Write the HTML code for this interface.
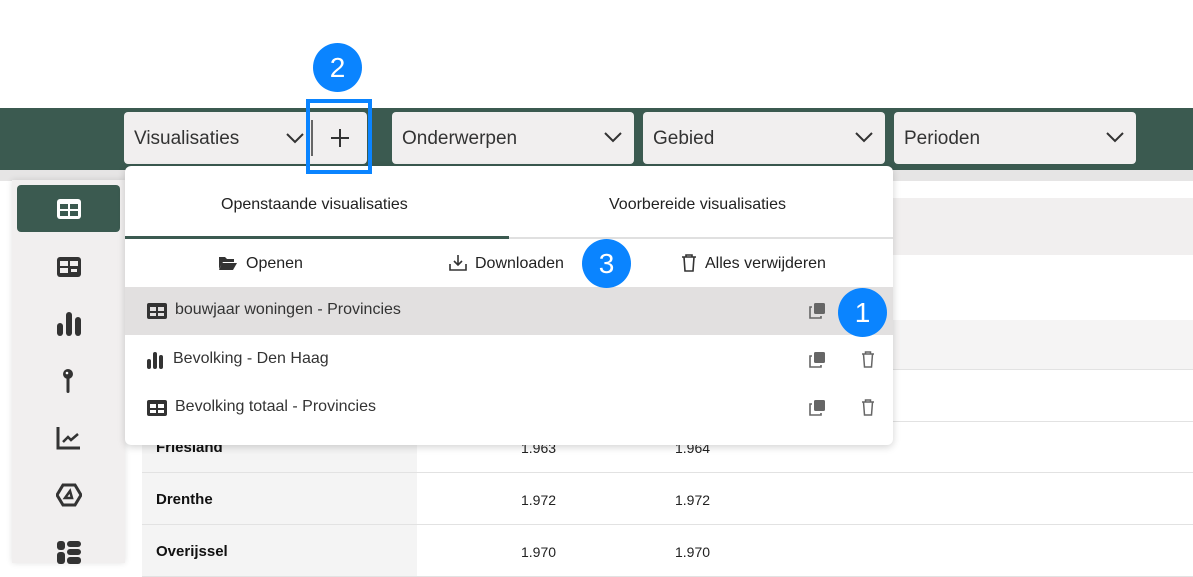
<!DOCTYPE html>
<html><head><meta charset="utf-8"><style>
*{box-sizing:border-box;margin:0;padding:0}
body{width:1193px;height:563px;overflow:hidden;background:#fff;font-family:"Liberation Sans",sans-serif;position:relative;color:#222}
.abs{position:absolute}
.hdr{left:0;top:108px;width:1193px;height:62px;background:#3b5a50}
.strip{left:0;top:170px;width:1193px;height:11px;background:#e6e5e5}
.sel{top:112px;height:52px;background:#f1efef;border-radius:4px;font-size:19px;color:#333;padding:16px 0 0 10px}
.chev{position:absolute;right:12px;top:19px}
.side{left:12px;top:180px;width:113px;height:383px;background:#f1efef;box-shadow:0 0 6px rgba(0,0,0,.12)}
.act{left:17px;top:185px;width:103px;height:47px;background:#3b5a50;border-radius:4px}
.ic{position:absolute;left:56px}
.row{left:142px;width:1051px;border-bottom:1px solid #e2e2e2;height:52px}
.lab{position:absolute;left:0;top:0;width:275px;height:100%;background:#f4f4f4;font-weight:bold;font-size:15px;padding:18px 0 0 14px;color:#111}
.num{position:absolute;top:19px;font-size:14px;color:#222}
.dd{left:125px;top:166px;width:768px;height:279px;background:#fff;border-radius:6px;box-shadow:0 2px 8px rgba(0,0,0,.18)}
.tab{position:absolute;top:30px;font-size:16px;color:#222}
.badge{width:49px;height:49px;border-radius:50%;background:#0a84ff;color:#fff;font-size:28px;text-align:center;line-height:49px;z-index:5}
.item{position:absolute;left:0;width:768px;height:48px;font-size:16px;color:#333}
.item span{position:absolute;top:14px}
</style></head><body>
<div class="abs hdr"></div>
<div class="abs strip"></div>
<div class="abs sel" style="left:124px;width:243px">Visualisaties
<svg class="abs" style="left:162px;top:20px" width="18" height="12" viewBox="0 0 18 12"><path d="M1 2l8 8 8-8" fill="none" stroke="#333" stroke-width="2"/></svg>
<div class="abs" style="left:187px;top:8px;width:2px;height:36px;background:#666"></div>
<svg class="abs" style="left:206px;top:16px" width="20" height="20"><path d="M10 1v18M1 10h18" stroke="#333" stroke-width="2"/></svg></div>
<div class="abs sel" style="left:392px;width:242px">Onderwerpen<svg class="chev" width="18" height="12"><path d="M1 2l8 8 8-8" fill="none" stroke="#333" stroke-width="2"/></svg></div>
<div class="abs sel" style="left:643px;width:242px">Gebied<svg class="chev" width="18" height="12"><path d="M1 2l8 8 8-8" fill="none" stroke="#333" stroke-width="2"/></svg></div>
<div class="abs sel" style="left:894px;width:242px">Perioden<svg class="chev" width="18" height="12"><path d="M1 2l8 8 8-8" fill="none" stroke="#333" stroke-width="2"/></svg></div>

<div class="abs" style="left:142px;top:198px;width:1051px;height:57px;background:#f1efef"></div>
<div class="abs" style="left:142px;top:320px;width:1051px;height:50px;background:#f5f4f4;border-bottom:1px solid #e2e2e2"></div>
<div class="abs row" style="top:370px"></div>
<div class="abs row" style="top:421px"><div class="lab">Friesland</div><div class="num" style="left:379px">1.963</div><div class="num" style="left:533px">1.964</div></div>
<div class="abs row" style="top:473px"><div class="lab">Drenthe</div><div class="num" style="left:379px">1.972</div><div class="num" style="left:533px">1.972</div></div>
<div class="abs row" style="top:525px"><div class="lab">Overijssel</div><div class="num" style="left:379px">1.970</div><div class="num" style="left:533px">1.970</div></div>

<div class="abs side"></div>
<div class="abs act"></div>
<svg class="ic" style="top:198px" width="26" height="22"><rect x="1" y="1" width="24" height="20" rx="3" fill="#fff"/><rect x="4" y="6" width="8" height="5" fill="#3b5a50"/><rect x="14" y="6" width="8" height="5" fill="#3b5a50"/><rect x="4" y="13" width="8" height="5" fill="#3b5a50"/><rect x="14" y="13" width="8" height="5" fill="#3b5a50"/></svg>
<svg class="ic" style="top:256px" width="26" height="22"><rect x="1" y="1" width="24" height="20" rx="3" fill="#333"/><rect x="4" y="5" width="8" height="5" fill="#f1efef"/><rect x="14" y="5" width="8" height="5" fill="#f1efef"/><rect x="4" y="12" width="8" height="5" fill="#f1efef"/><rect x="15" y="13" width="6" height="3" fill="#f1efef"/></svg>
<svg class="ic" style="top:311px" width="26" height="26"><rect x="1" y="12" width="6" height="13" rx="3" fill="#333"/><rect x="10" y="1" width="6" height="24" rx="3" fill="#333"/><rect x="19" y="6" width="6" height="19" rx="3" fill="#333"/></svg>
<svg class="ic" style="top:367px" width="26" height="28"><circle cx="12" cy="7" r="5" fill="#333"/><circle cx="11" cy="6" r="1.3" fill="#fff"/><rect x="10.5" y="10" width="3" height="16" rx="1.5" fill="#333"/></svg>
<svg class="ic" style="top:425px" width="26" height="26"><path d="M2 2v21h22" fill="none" stroke="#333" stroke-width="3"/><path d="M7 17l5-5 3 3 7-6" fill="none" stroke="#333" stroke-width="2.5"/></svg>
<svg class="ic" style="top:483px" width="26" height="24"><path d="M7 2h12l6 10-6 10H7L1 12z" fill="none" stroke="#333" stroke-width="3"/><path d="M9 15l5-7 2 7z" fill="none" stroke="#333" stroke-width="2.5"/></svg>
<svg class="ic" style="top:540px" width="26" height="24"><rect x="1" y="1" width="8" height="9" rx="3" fill="#333"/><rect x="11" y="1" width="14" height="6" rx="3" fill="#333"/><rect x="11" y="9" width="14" height="6" rx="3" fill="#333"/><rect x="1" y="12" width="8" height="12" rx="3" fill="#333"/><rect x="11" y="17" width="14" height="7" rx="3" fill="#333"/></svg>

<div class="abs dd">
<div class="tab" style="left:96px">Openstaande visualisaties</div>
<div class="tab" style="left:484px">Voorbereide visualisaties</div>
<div class="abs" style="left:0;top:71px;width:768px;height:2px;background:#e0e0e0"></div>
<div class="abs" style="left:0;top:70px;width:384px;height:3px;background:#3b5a50"></div>
<svg class="abs" style="left:93px;top:89px" width="20" height="16"><path d="M1 2h6l2 2h7v3H5L1 14z" fill="#333"/><path d="M4 8h15l-4 7H1z" fill="#333"/></svg>
<div class="tab" style="left:121px;top:89px">Openen</div>
<svg class="abs" style="left:323px;top:88px" width="20" height="18"><path d="M10 1v10M6 7l4 4 4-4" fill="none" stroke="#333" stroke-width="1.6"/><path d="M2 10v6h16v-6" fill="none" stroke="#333" stroke-width="1.6"/></svg>
<div class="tab" style="left:350px;top:89px">Downloaden</div>
<svg class="abs" style="left:556px;top:88px" width="16" height="18"><path d="M1 3h14M5 3V1h6v2M3 3l1 14h8l1-14" fill="none" stroke="#333" stroke-width="1.6"/></svg>
<div class="tab" style="left:580px;top:89px">Alles verwijderen</div>
<div class="item" style="top:121px;background:#e2e0e0">
<svg class="abs" style="left:22px;top:16px" width="20" height="16"><rect x="0" y="0" width="20" height="16" rx="2" fill="#333"/><rect x="3" y="4" width="6" height="4" fill="#e2e0e0"/><rect x="11" y="4" width="6" height="4" fill="#e2e0e0"/><rect x="3" y="10" width="6" height="3" fill="#e2e0e0"/><rect x="11" y="10" width="6" height="3" fill="#e2e0e0"/></svg>
<span style="left:50px">bouwjaar woningen - Provincies</span>
<svg class="abs" style="left:684px;top:16px" width="16" height="16"><rect x="5" y="0" width="11" height="11" rx="1.5" fill="#666"/><path d="M3 4H1v11h11v-2" fill="none" stroke="#666" stroke-width="1.6"/></svg></div>
<div class="item" style="top:170px">
<svg class="abs" style="left:22px;top:15px" width="18" height="18"><rect x="0" y="8" width="4" height="10" rx="2" fill="#333"/><rect x="6" y="1" width="4" height="17" rx="2" fill="#333"/><rect x="12" y="4" width="4" height="14" rx="2" fill="#333"/></svg>
<span style="left:48px">Bevolking - Den Haag</span>
<svg class="abs" style="left:684px;top:16px" width="16" height="16"><rect x="5" y="0" width="11" height="11" rx="1.5" fill="#666"/><path d="M3 4H1v11h11v-2" fill="none" stroke="#666" stroke-width="1.6"/></svg>
<svg class="abs" style="left:736px;top:15px" width="14" height="18"><path d="M1 3h12M4.5 3V1h5v2M2.5 3l1 13h7l1-13" fill="none" stroke="#666" stroke-width="1.5"/></svg></div>
<div class="item" style="top:218px">
<svg class="abs" style="left:22px;top:16px" width="20" height="16"><rect x="0" y="0" width="20" height="16" rx="2" fill="#333"/><rect x="3" y="4" width="6" height="4" fill="#fff"/><rect x="11" y="4" width="6" height="4" fill="#fff"/><rect x="3" y="10" width="6" height="3" fill="#fff"/><rect x="11" y="10" width="6" height="3" fill="#fff"/></svg>
<span style="left:50px">Bevolking totaal - Provincies</span>
<svg class="abs" style="left:684px;top:16px" width="16" height="16"><rect x="5" y="0" width="11" height="11" rx="1.5" fill="#666"/><path d="M3 4H1v11h11v-2" fill="none" stroke="#666" stroke-width="1.6"/></svg>
<svg class="abs" style="left:736px;top:15px" width="14" height="18"><path d="M1 3h12M4.5 3V1h5v2M2.5 3l1 13h7l1-13" fill="none" stroke="#666" stroke-width="1.5"/></svg></div>
</div>
<div class="abs" style="left:306px;top:99px;width:66px;height:75px;border:4px solid #0a84ff;z-index:4"></div>
<div class="abs badge" style="left:313px;top:43px">2</div>
<div class="abs badge" style="left:582px;top:239px">3</div>
<div class="abs badge" style="left:838px;top:288px">1</div>
</body></html>
